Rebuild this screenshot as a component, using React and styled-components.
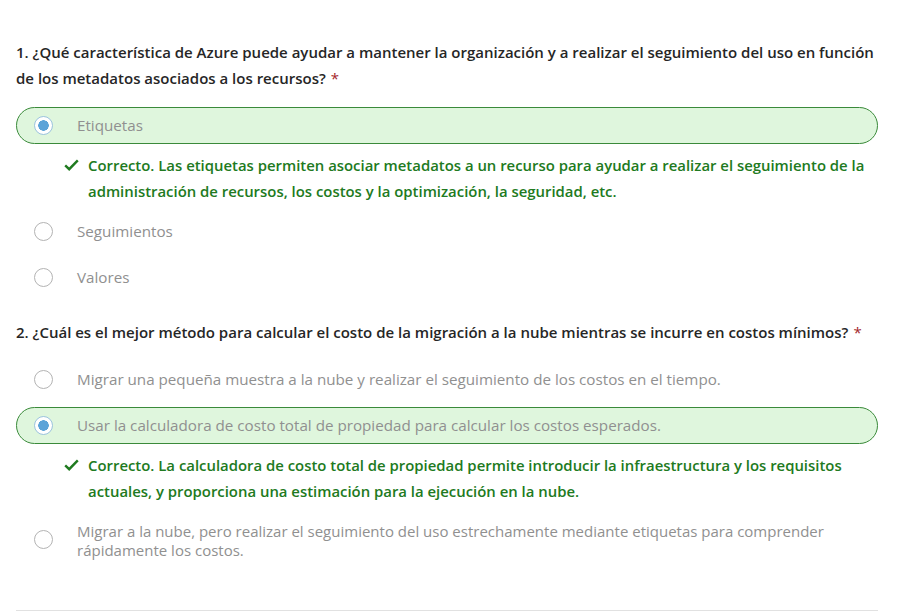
import styled, { createGlobalStyle } from "styled-components";

const GlobalStyle = createGlobalStyle`
    body {
        margin: 0;
        background: #ffffff;
        font-family: "Open Sans", "Noto Sans", sans-serif;
    }
`;

const questions = [
    {
        number: 1,
        title: "¿Qué característica de Azure puede ayudar a mantener la organización y a realizar el seguimiento del uso en función de los metadatos asociados a los recursos?",
        options: [
            {text: "Etiquetas", selected: true, feedback: "Correcto. Las etiquetas permiten asociar metadatos a un recurso para ayudar a realizar el seguimiento de la administración de recursos, los costos y la optimización, la seguridad, etc."},
            {text: "Seguimientos"},
            {text: "Valores"},
        ],
    },
    {
        number: 2,
        title: "¿Cuál es el mejor método para calcular el costo de la migración a la nube mientras se incurre en costos mínimos?",
        options: [
            {text: "Migrar una pequeña muestra a la nube y realizar el seguimiento de los costos en el tiempo."},
            {text: "Usar la calculadora de costo total de propiedad para calcular los costos esperados.", selected: true, feedback: "Correcto. La calculadora de costo total de propiedad permite introducir la infraestructura y los requisitos actuales, y proporciona una estimación para la ejecución en la nube."},
            {text: "Migrar a la nube, pero realizar el seguimiento del uso estrechamente mediante etiquetas para comprender rápidamente los costos.", small: true},
        ],
    },
];

const CheckIcon = () => (
    <svg width="15" height="12" viewBox="0 0 15 12">
        <path d="M1.2 6.4 L5.2 10.2 L13.8 1.4" fill="none" stroke="#1f7a1f" strokeWidth="2.4"/>
    </svg>
);

const App = () => {
    return (
        <Page>
            <GlobalStyle/>
            {questions.map((q) => (
                <QuestionBlock key={q.number}>
                    <QuestionTitle>{`${q.number}. ${q.title}`}<Required>*</Required></QuestionTitle>
                    <OptionList>
                        {q.options.map((o) => (
                            <div key={o.text}>
                                <OptionRow $selected={o.selected}>
                                    <Radio $selected={o.selected}/>
                                    <OptionText $small={o.small}>{o.text}</OptionText>
                                </OptionRow>
                                {o.feedback && (
                                    <Feedback>
                                        <CheckWrap><CheckIcon/></CheckWrap>
                                        <span>{o.feedback}</span>
                                    </Feedback>
                                )}
                            </div>
                        ))}
                    </OptionList>
                </QuestionBlock>
            ))}
            <Divider/>
        </Page>
    );
}

export default App;

const Page = styled.div`
    width: 862px;
    padding: 39px 0 0 16px;
    display: flex;
    flex-flow: column;
    gap: 23px;
`;

const QuestionBlock = styled.div`
    display: flex;
    flex-flow: column;
`;

const QuestionTitle = styled.div`
    font-size: 15px;
    font-weight: 600;
    line-height: 26px;
    color: #262626;
`;

const Required = styled.span`
    margin-left: 5px;
    color: #a4262c;
    font-weight: 400;
`;

const OptionList = styled.div`
    display: flex;
    flex-flow: column;
    gap: 9px;
    margin-top: 16px;
`;

const OptionRow = styled.div`
    display: flex;
    flex-flow: row;
    align-items: center;
    gap: 24px;
    min-height: 35px;
    padding: 0 16px;
    border: 1px solid ${(p) => (p.$selected ? "#3a8a3a" : "transparent")};
    border-radius: 19px;
    background: ${(p) => (p.$selected ? "#dff6dd" : "transparent")};
`;

const Radio = styled.div`
    flex: none;
    box-sizing: border-box;
    width: 19px;
    height: 19px;
    margin-left: 1px;
    border-radius: 50%;
    border: 1px solid ${(p) => (p.$selected ? "#9cc3df" : "#b3b3b3")};
    background: ${(p) => (p.$selected ? "radial-gradient(circle, #5ba3d8 0 5px, #ffffff 5.5px)" : "#ffffff")};
`;

const OptionText = styled.div`
    font-size: ${(p) => (p.$small ? "15px" : "15.2px")};
    font-weight: 400;
    line-height: ${(p) => (p.$small ? "19px" : "22px")};
    color: #909090;
    padding: ${(p) => (p.$small ? "9px 0 5px" : "0")};
    margin-top: -1px;
`;

const Feedback = styled.div`
    display: flex;
    flex-flow: row;
    gap: 9px;
    margin: 8px 0 0 48px;
    font-size: 14.9px;
    font-weight: 600;
    line-height: 26px;
    color: #217a21;
`;

const CheckWrap = styled.div`
    flex: none;
    display: flex;
    align-items: center;
    height: 26px;
`;

const Divider = styled.div`
    margin-top: 21px;
    border-bottom: 1px solid #e1e1e1;
`;
